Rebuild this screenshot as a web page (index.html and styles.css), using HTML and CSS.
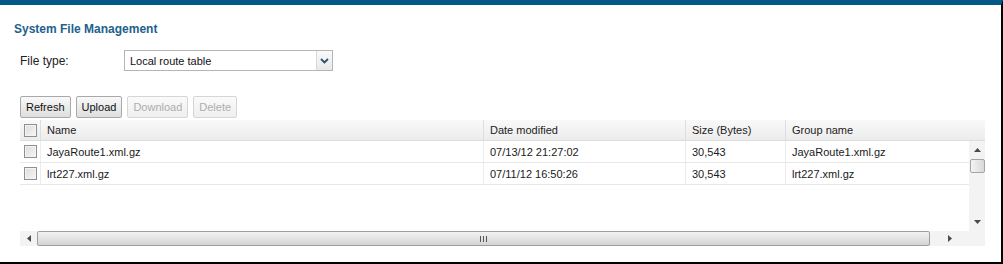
FILE: index.html
```html
<!DOCTYPE html>
<html>
<head>
<meta charset="utf-8">
<link rel="stylesheet" href="styles.css">
</head>
<body>
<div class="frame">
  <h1 class="title">System File Management</h1>
  <div class="field">
    <label class="field-label">File type:</label>
    <div class="select">
      <span class="select-text">Local route table</span>
      <span class="select-btn">
        <svg width="9" height="6" viewBox="0 0 9 6"><path d="M1 1 L4.5 4.5 L8 1" fill="none" stroke="#2f4f6f" stroke-width="1.8"/></svg>
      </span>
    </div>
  </div>
  <div class="toolbar">
    <button class="btn">Refresh</button>
    <button class="btn">Upload</button>
    <button class="btn disabled">Download</button>
    <button class="btn disabled">Delete</button>
  </div>
  <div class="grid">
    <div class="head">
      <div class="cell c-chk"><span class="chk"></span></div>
      <div class="cell c-name">Name</div>
      <div class="cell c-date">Date modified</div>
      <div class="cell c-size">Size (Bytes)</div>
      <div class="cell c-group">Group name</div>
    </div>
    <div class="body">
      <div class="rows">
        <div class="row">
          <div class="cell c-chk"><span class="chk"></span></div>
          <div class="cell c-name">JayaRoute1.xml.gz</div>
          <div class="cell c-date">07/13/12 21:27:02</div>
          <div class="cell c-size">30,543</div>
          <div class="cell c-group">JayaRoute1.xml.gz</div>
        </div>
        <div class="row">
          <div class="cell c-chk"><span class="chk"></span></div>
          <div class="cell c-name">lrt227.xml.gz</div>
          <div class="cell c-date">07/11/12 16:50:26</div>
          <div class="cell c-size">30,543</div>
          <div class="cell c-group">lrt227.xml.gz</div>
        </div>
      </div>
      <div class="vscroll">
        <svg class="arr" width="7" height="4" viewBox="0 0 7 4"><path d="M0 4 L3.5 0 L7 4 Z" fill="#4a4a4a"/></svg>
        <div class="vthumb"></div>
        <div class="vspace"></div>
        <svg class="arr" width="7" height="4" viewBox="0 0 7 4"><path d="M0 0 L3.5 4 L7 0 Z" fill="#4a4a4a"/></svg>
      </div>
    </div>
    <div class="foot">
      <div class="hscroll">
        <span class="harr"><svg width="4" height="7" viewBox="0 0 4 7"><path d="M4 0 L0 3.5 L4 7 Z" fill="#4a4a4a"/></svg></span>
        <div class="hthumb">
          <svg width="7" height="6" viewBox="0 0 7 6"><path d="M0.5 0 V6 M3.5 0 V6 M6.5 0 V6" stroke="#555" stroke-width="1"/></svg>
        </div>
        <span class="harr right"><svg width="4" height="7" viewBox="0 0 4 7"><path d="M0 0 L4 3.5 L0 7 Z" fill="#4a4a4a"/></svg></span>
      </div>
      <div class="corner"></div>
    </div>
  </div>
</div>
</body>
</html>
```
FILE: styles.css
```css
* { box-sizing: border-box; }
html, body { margin: 0; padding: 0; background: #fff; }
body { font-family: "Liberation Sans", Arial, sans-serif; font-size: 11px; color: #1a1a1a; }

.frame {
  width: 1003px;
  height: 264px;
  border-top: 5px solid #05598a;
  border-right: 2px solid #000;
  border-bottom: 2px solid #000;
  background: #fff;
  overflow: hidden;
}

.title {
  margin: 17px 0 0 14px;
  font-size: 12px;
  line-height: 15px;
  font-weight: bold;
  color: #22618e;
}

.field {
  display: flex;
  align-items: center;
  margin: 13px 0 0 20px;
  height: 21px;
}
.field-label { width: 104px; font-size: 12px; color: #222; }
.select {
  width: 209px;
  height: 21px;
  border: 1px solid #b5b5b5;
  display: flex;
  align-items: center;
  background: #fff;
}
.select-text { flex: 1; padding-left: 5px; font-size: 11px; color: #111; }
.select-btn {
  width: 16px;
  height: 19px;
  border-left: 1px solid #d8d8d8;
  background: linear-gradient(#fafafa, #e8e8e8);
  display: flex;
  align-items: center;
  justify-content: center;
}

.toolbar {
  display: flex;
  gap: 5px;
  margin: 25px 0 0 20px;
  height: 22px;
}
.btn {
  font-family: "Liberation Sans", Arial, sans-serif;
  font-size: 11px;
  height: 22px;
  padding: 0 5px;
  border: 1px solid #a9a9a9;
  border-radius: 2px;
  background: linear-gradient(#f9f9f9, #dedede);
  color: #111;
}
.btn.disabled {
  border-color: #d6d6d6;
  background: linear-gradient(#fafafa, #efefef);
  color: #adadad;
}

.grid {
  margin: 2px 0 0 20px;
  width: 965px;
}
.head {
  display: flex;
  height: 21px;
  background: linear-gradient(#f9f9f9, #ececec);
  border-bottom: 1px solid #dcdcdc;
}
.cell {
  display: flex;
  align-items: center;
  padding-left: 6px;
  border-left: 1px solid #dedede;
  white-space: nowrap;
}
.head .cell { color: #222; }
.c-chk { width: 20px; padding-left: 4px; border-left: none; }
.c-name { width: 443px; }
.c-date { width: 202px; }
.c-size { width: 100px; }
.c-group { flex: 1; }

.chk {
  width: 13px;
  height: 13px;
  border: 1px solid #8e8f8f;
  background: linear-gradient(135deg, #dcdcdc, #f6f6f6);
  box-shadow: inset 0 0 0 1px #f4f4f4;
}

.body {
  display: flex;
  height: 90px;
}
.rows { width: 949px; }
.row {
  display: flex;
  height: 22px;
  border-bottom: 1px solid #e8e8e8;
}
.row .cell { border-left-color: #ececec; }

.vscroll {
  width: 16px;
  background: #f3f3f3;
  display: flex;
  flex-direction: column;
  align-items: center;
  padding: 7px 0 7px;
}
.vthumb {
  width: 15px;
  height: 14px;
  margin-top: 7px;
  border: 1px solid #a4a4a4;
  border-radius: 2px;
  background: linear-gradient(90deg, #f4f4f4, #d8d8d8);
}
.vspace { flex: 1; }

.foot {
  display: flex;
  height: 15px;
}
.hscroll {
  width: 949px;
  display: flex;
  align-items: center;
  background: #f3f3f3;
}
.harr {
  width: 17px;
  display: flex;
  justify-content: center;
}
.harr.right { width: 39px; }
.hthumb {
  width: 893px;
  height: 15px;
  border: 1px solid #9e9e9e;
  border-radius: 2px;
  background: linear-gradient(#f2f2f2, #d4d4d4);
  display: flex;
  align-items: center;
  justify-content: center;
}
.corner { flex: 1; background: #f3f3f3; }
```
